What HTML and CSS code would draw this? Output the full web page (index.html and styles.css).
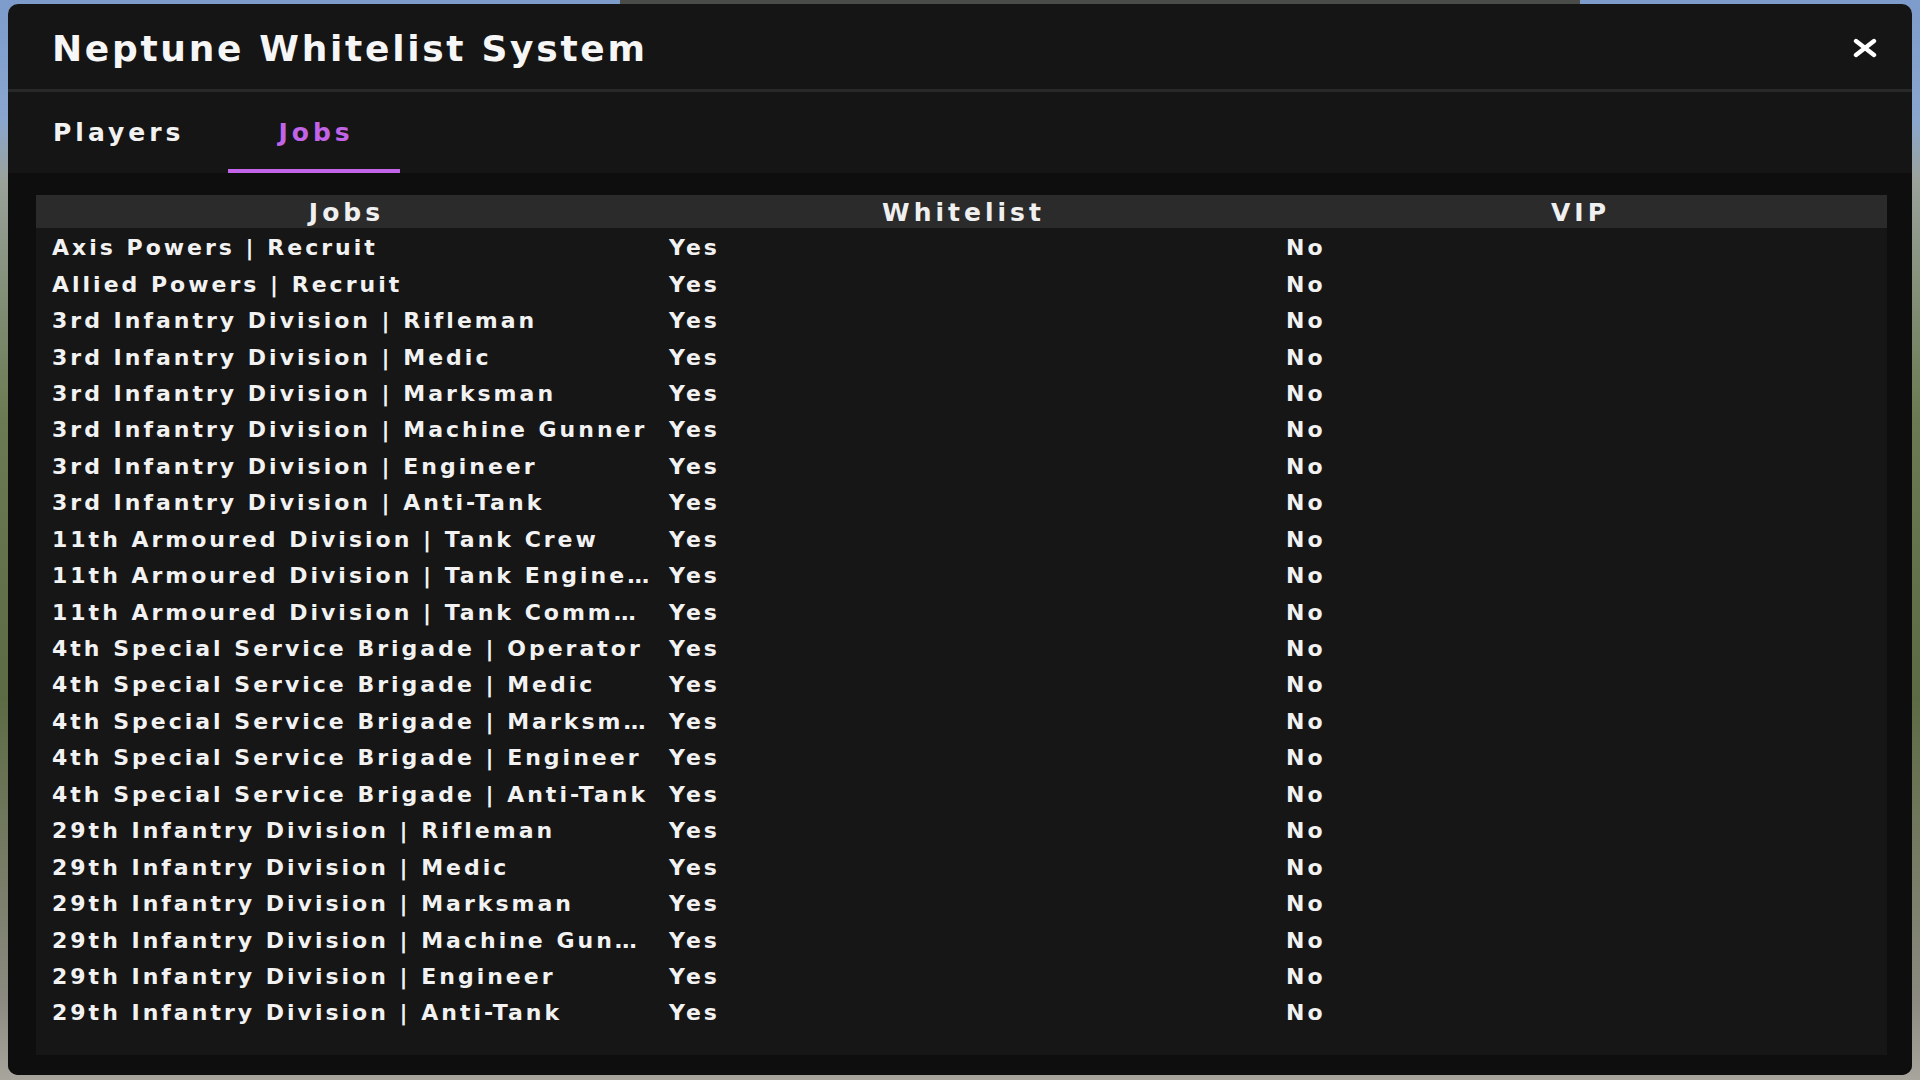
FILE: index.html
```html
<!DOCTYPE html>
<html lang="en">
<head>
<meta charset="utf-8">
<title>Neptune Whitelist System</title>
<link rel="stylesheet" href="styles.css">
</head>
<body>
<div class="window">
  <header class="header">
    <h1 class="title">Neptune Whitelist System</h1>
    <button class="close" aria-label="Close">
      <svg width="26" height="20" viewBox="0 0 26 20"><path d="M4 3 L22 17 M22 3 L4 17" stroke="#fff" stroke-width="4.4" stroke-linecap="round" fill="none"/></svg>
    </button>
  </header>
  <nav class="tabs">
    <div class="tab">Players</div>
    <div class="tab active">Jobs</div>
  </nav>
  <main class="content">
    <div class="table-wrap">
      <table class="jobs">
        <thead>
          <tr><th>Jobs</th><th>Whitelist</th><th>VIP</th></tr>
        </thead>
        <tbody>
          <tr><td>Axis Powers | Recruit</td><td>Yes</td><td>No</td></tr>
          <tr><td>Allied Powers | Recruit</td><td>Yes</td><td>No</td></tr>
          <tr><td>3rd Infantry Division | Rifleman</td><td>Yes</td><td>No</td></tr>
          <tr><td>3rd Infantry Division | Medic</td><td>Yes</td><td>No</td></tr>
          <tr><td>3rd Infantry Division | Marksman</td><td>Yes</td><td>No</td></tr>
          <tr><td>3rd Infantry Division | Machine Gunner</td><td>Yes</td><td>No</td></tr>
          <tr><td>3rd Infantry Division | Engineer</td><td>Yes</td><td>No</td></tr>
          <tr><td>3rd Infantry Division | Anti-Tank</td><td>Yes</td><td>No</td></tr>
          <tr><td>11th Armoured Division | Tank Crew</td><td>Yes</td><td>No</td></tr>
          <tr><td>11th Armoured Division | Tank Engineer</td><td>Yes</td><td>No</td></tr>
          <tr><td>11th Armoured Division | Tank Commander</td><td>Yes</td><td>No</td></tr>
          <tr><td>4th Special Service Brigade | Operator</td><td>Yes</td><td>No</td></tr>
          <tr><td>4th Special Service Brigade | Medic</td><td>Yes</td><td>No</td></tr>
          <tr><td>4th Special Service Brigade | Marksman</td><td>Yes</td><td>No</td></tr>
          <tr><td>4th Special Service Brigade | Engineer</td><td>Yes</td><td>No</td></tr>
          <tr><td>4th Special Service Brigade | Anti-Tank</td><td>Yes</td><td>No</td></tr>
          <tr><td>29th Infantry Division | Rifleman</td><td>Yes</td><td>No</td></tr>
          <tr><td>29th Infantry Division | Medic</td><td>Yes</td><td>No</td></tr>
          <tr><td>29th Infantry Division | Marksman</td><td>Yes</td><td>No</td></tr>
          <tr><td>29th Infantry Division | Machine Gunner</td><td>Yes</td><td>No</td></tr>
          <tr><td>29th Infantry Division | Engineer</td><td>Yes</td><td>No</td></tr>
          <tr><td>29th Infantry Division | Anti-Tank</td><td>Yes</td><td>No</td></tr>
        </tbody>
      </table>
    </div>
  </main>
</div>
</body>
</html>
```
FILE: styles.css
```css
* { box-sizing: border-box; }

html, body {
  margin: 0;
  padding: 0;
  width: 1920px;
  height: 1080px;
  overflow: hidden;
}

body {
  background:
    linear-gradient(90deg, transparent 0 620px, #4a4c4a 620px 1580px, transparent 1580px) top / 100% 6px no-repeat,
    linear-gradient(180deg, #7d9ccb 0px, #8aa6cf 120px, #9aa29a 180px, #6b7a52 420px, #5d6b45 700px, #8c8a80 1000px, #a8a69c 1080px);
  font-family: "DejaVu Sans", Inter, sans-serif;
  color: #f2f2f2;
  padding: 4px 8px 5px 8px;
}

.window {
  height: 1071px;
  background: #151515;
  border-radius: 10px;
  display: flex;
  flex-direction: column;
  overflow: hidden;
}

.header {
  height: 88px;
  flex: none;
  display: flex;
  align-items: center;
  justify-content: space-between;
  padding: 4px 34px 0 44px;
  border-bottom: 3px solid #292929;
}

.title {
  margin: 0;
  font-size: 36px;
  font-weight: 700;
  letter-spacing: 2.7px;
  color: #f6f6f6;
}

.close {
  background: none;
  border: 0;
  padding: 0;
  width: 26px;
  height: 20px;
  margin-top: -2px;
  display: flex;
}

.tabs {
  height: 81px;
  flex: none;
  display: flex;
  align-items: stretch;
  background: #151515;
}

.tab {
  display: flex;
  align-items: center;
  padding: 4px 44px 0 45px;
  font-size: 25px;
  font-weight: 700;
  letter-spacing: 4px;
  color: #f2f2f2;
  border-bottom: 4px solid transparent;
}

.tab.active {
  color: #c264e8;
  border-bottom-color: #c264e8;
  padding: 4px 46px 0 50px;
}

.content {
  flex: 1;
  min-height: 0;
  background: #0e0e0e;
  padding: 22px 25px 20px 28px;
  display: flex;
}

.table-wrap {
  flex: 1;
  background: #161616;
}

.jobs {
  width: 100%;
  border-collapse: collapse;
  table-layout: fixed;
}

.jobs th {
  height: 33px;
  padding: 2px 0 0 4px;
  background: #2b2b2b;
  font-size: 25px;
  font-weight: 700;
  letter-spacing: 4px;
  text-align: center;
  color: #f0f0f0;
}

.jobs td {
  height: 36.45px;
  padding: 3px 2px 0 16px;
  font-size: 22px;
  font-weight: 700;
  letter-spacing: 3px;
  white-space: nowrap;
  overflow: hidden;
  text-overflow: ellipsis;
  color: #f2f2f2;
}
```
